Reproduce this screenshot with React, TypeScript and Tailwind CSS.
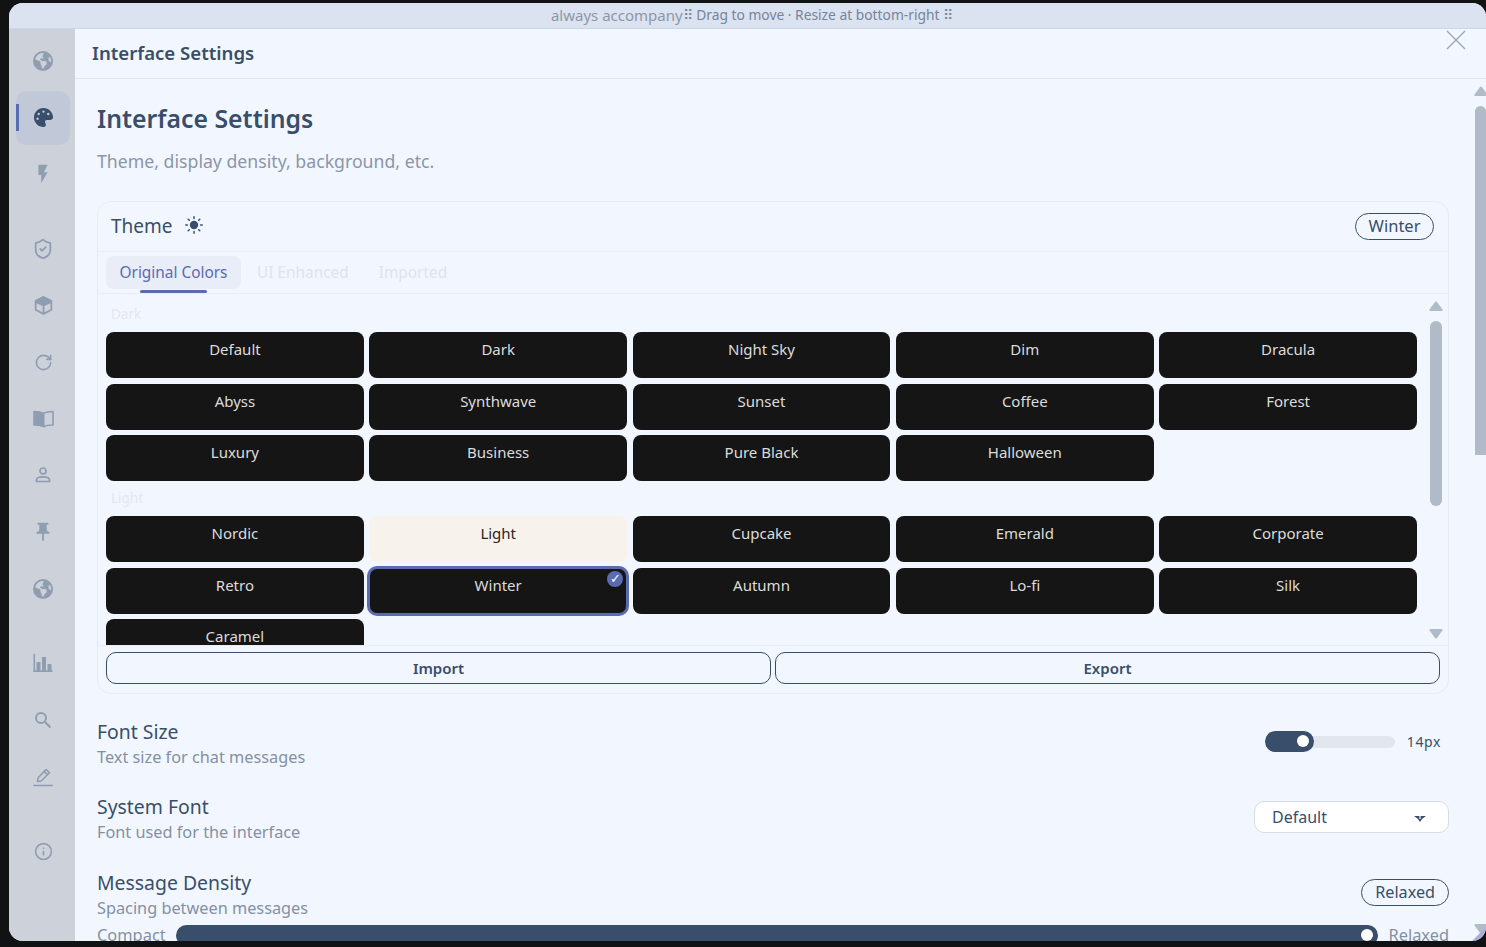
import type { ReactNode } from 'react'
import { FaEarthAmericas, FaPalette } from 'react-icons/fa6'
import { MdFlashOn, MdPushPin } from 'react-icons/md'
import { LuShieldCheck, LuRotateCw, LuInfo } from 'react-icons/lu'

const FONT = '"Noto Sans", "Open Sans", sans-serif'

function BoxIcon() {
  return (
    <svg width="21" height="21" viewBox="0 0 20 20" fill="none" stroke="currentColor" strokeWidth="1.7" strokeLinejoin="round">
      <path d="M10 2 L17.5 5.5 V14 L10 18 L2.5 14 V5.5 Z" />
      <path d="M2.5 6.5 L10 10 L17.5 6.5 M10 10 V18" />
      <path d="M3.5 5.5 L10 2 L10 9.5 Z M10 2 L16.5 5.5 L10 9.5 Z" fill="currentColor" />
    </svg>
  )
}

function BookIcon() {
  return (
    <svg width="21" height="18" viewBox="0 0 21 18" fill="none" stroke="currentColor" strokeWidth="1.6" strokeLinejoin="round">
      <path d="M10.5 3.5 C8 2 5 1.5 1 1.5 V15 C5 15 8 15.5 10.5 16.5 Z" fill="currentColor" />
      <path d="M10.5 3.5 C13 2 16 1.5 20 1.5 V15 C16 15 13 15.5 10.5 16.5 Z" />
    </svg>
  )
}

function PersonIcon() {
  return (
    <svg width="18" height="18" viewBox="0 0 18 18" fill="none" stroke="currentColor" strokeWidth="1.7">
      <circle cx="9" cy="5" r="3" />
      <path d="M2.5 15.5 V14 C2.5 11.8 4.5 10.8 9 10.8 C13.5 10.8 15.5 11.8 15.5 14 V15.5 Z" strokeLinejoin="round" />
    </svg>
  )
}

function ChartIcon() {
  return (
    <svg width="20" height="18" viewBox="0 0 20 18" fill="currentColor">
      <rect x="0.5" y="0" width="1.6" height="18" />
      <rect x="0.5" y="16.4" width="19" height="1.6" />
      <rect x="3.5" y="8" width="4" height="9" />
      <rect x="9" y="3" width="4" height="14" />
      <rect x="14.5" y="10" width="4" height="7" />
    </svg>
  )
}

function SearchIcon() {
  return (
    <svg width="18" height="18" viewBox="0 0 18 18" fill="none" stroke="currentColor" strokeWidth="2">
      <circle cx="7" cy="7" r="5" />
      <path d="M10.8 10.8 L16.5 16.5" />
    </svg>
  )
}

function PencilIcon() {
  return (
    <svg width="20" height="20" viewBox="0 0 20 20" fill="none" stroke="currentColor" strokeWidth="1.6" strokeLinejoin="round">
      <path d="M4.5 14.5 L5 11 L13 2.5 L16.5 5.7 L8.2 14 Z" />
      <path d="M11.2 4.5 L14.6 7.7" />
      <path d="M1 18.5 H19.5" strokeLinecap="round" />
    </svg>
  )
}

function SunIcon() {
  return (
    <svg width="18" height="18" viewBox="0 0 18 18" fill="#394e6a" stroke="#394e6a">
      <circle cx="9" cy="9" r="4.2" stroke="none" />
      <path
        d="M9 .8 V2.4 M9 15.6 V17.2 M.8 9 H2.4 M15.6 9 H17.2 M3.2 3.2 L4.3 4.3 M13.7 13.7 L14.8 14.8 M3.2 14.8 L4.3 13.7 M13.7 4.3 L14.8 3.2"
        strokeWidth="1.5"
        strokeLinecap="round"
      />
    </svg>
  )
}

function Arrow({ down }: { down?: boolean }) {
  return (
    <svg width="14" height="10" viewBox="0 0 14 10" fill="#b1bac7" className={down ? 'rotate-180' : ''}>
      <path d="M6 1 Q7 0 8 1 L13.5 8.5 Q14 10 12.5 10 H1.5 Q0 10 .5 8.5 Z" />
    </svg>
  )
}

const groups: { icon: ReactNode; active?: boolean }[][] = [
  [
    { icon: <FaEarthAmericas size={20} /> },
    { icon: <FaPalette size={19} />, active: true },
    { icon: <MdFlashOn size={22} /> },
  ],
  [
    { icon: <LuShieldCheck size={22} /> },
    { icon: <BoxIcon /> },
    { icon: <LuRotateCw size={19} /> },
    { icon: <BookIcon /> },
    { icon: <PersonIcon /> },
    { icon: <MdPushPin size={22} /> },
    { icon: <FaEarthAmericas size={20} /> },
  ],
  [{ icon: <ChartIcon /> }, { icon: <SearchIcon /> }, { icon: <PencilIcon /> }],
  [{ icon: <LuInfo size={19} /> }],
]

const dark = ['Default', 'Dark', 'Night Sky', 'Dim', 'Dracula', 'Abyss', 'Synthwave', 'Sunset', 'Coffee', 'Forest', 'Luxury', 'Business', 'Pure Black', 'Halloween']
const light = ['Nordic', 'Light', 'Cupcake', 'Emerald', 'Corporate', 'Retro', 'Winter', 'Autumn', 'Lo-fi', 'Silk', 'Caramel']

function ThemeButton({ name }: { name: string }) {
  if (name === 'Light') {
    return <button className="h-[46px] rounded-[8px] bg-[#f7f3ec] pt-[5px] text-[15px] leading-[24px] text-[#2e2320] flex justify-center">{name}</button>
  }
  if (name === 'Winter') {
    return (
      <button className="relative h-[46px] rounded-[8px] bg-[#151515] pt-[5px] text-[15px] leading-[24px] text-[#dcdcdc] flex justify-center outline-[3px] outline-[#5a6bb0] -outline-offset-[1px]">
        {name}
        <span className="absolute right-[4px] top-[3px] flex h-[16px] w-[16px] items-center justify-center rounded-full bg-[#5a6bb0] text-[13px] leading-none text-white">✓</span>
      </button>
    )
  }
  return <button className="h-[46px] rounded-[8px] bg-[#151515] pt-[5px] text-[15px] leading-[24px] text-[#dcdcdc] flex justify-center">{name}</button>
}

function SettingLabel({ title, desc }: { title: string; desc: string }) {
  return (
    <div>
      <div className="text-[19.4px] leading-[26px] text-[#394e6a]">{title}</div>
      <div className="text-[16.3px] leading-[24px] text-[#8490a3]">{desc}</div>
    </div>
  )
}

export default function App() {
  return (
    <div className="h-[947px] w-[1486px] overflow-hidden bg-[#111213] pl-[9px] pt-[3px]" style={{ fontFamily: FONT }}>
      <div className="relative flex h-[938px] flex-col overflow-hidden rounded-[14px] bg-[#f2f7ff]">
        <div className="flex h-[26px] shrink-0 items-center justify-center border-b border-[#cdd6e9] bg-[#dbe2f0] pl-[9px] text-[13.8px] text-[#76849c]">
          <span className="text-[15px] text-[#8d97a9]">always accompany</span>⠿ Drag to move · Resize at bottom-right ⠿
        </div>
        <div className="flex min-h-0 flex-1">
          <aside className="flex w-[66px] shrink-0 flex-col gap-[20.5px] bg-[#cdd1da] pl-[7px] pr-[5px] pt-[5px] text-[#8f9db0]">
            {groups.map((group, i) => (
              <div key={i} className="flex flex-col gap-[2.67px]">
                {group.map((item, j) => (
                  <div
                    key={j}
                    className={
                      item.active
                        ? 'relative flex h-[54px] items-center justify-center rounded-[10px] bg-[#c1c9d8] text-[#394e6a]'
                        : 'flex h-[54px] items-center justify-center'
                    }
                  >
                    {item.active && <span className="absolute left-0 top-[13px] h-[27px] w-[3px] bg-[#5a6bb0]" />}
                    {item.icon}
                  </div>
                ))}
              </div>
            ))}
          </aside>
          <main className="flex min-w-0 flex-1 flex-col">
            <header className="relative flex h-[50px] shrink-0 items-center border-b border-[#dfe6f2] pb-[2px] pl-[17px] text-[18.6px] font-semibold text-[#394e6a]">
              Interface Settings
              <svg width="20" height="20" viewBox="0 0 20 20" stroke="#9aa5b4" strokeWidth="1.3" className="absolute right-[20px] top-[1px]">
                <path d="M1 1 L19 19 M19 1 L1 19" />
              </svg>
            </header>
            <div className="flex min-h-0 flex-1">
              <div className="min-w-0 flex-1 overflow-hidden pl-[22px] pr-[26px] pt-[21px]">
                <h1 className="text-[24.8px] font-semibold leading-[36px] text-[#394e6a]">Interface Settings</h1>
                <p className="mt-[11px] text-[17.7px] leading-[28px] text-[#8b95a8]">Theme, display density, background, etc.</p>

                <section className="mt-[26px] h-[493px] rounded-[14px] border border-[#e6ebf5]">
                  <div className="flex h-[50px] items-center justify-between border-b border-[#e8edf6] pl-[13px] pr-[14px]">
                    <div className="flex items-center gap-[12px] text-[19px] text-[#394e6a]">
                      Theme
                      <span className="-mt-[4px]"><SunIcon /></span>
                    </div>
                    <span className="flex h-[27px] items-center rounded-full border border-[#394e6a] px-[12.5px] text-[16.5px] text-[#394e6a]">Winter</span>
                  </div>
                  <div className="flex h-[42px] items-start gap-[16px] border-b border-[#e8edf6] pl-[8px] pt-[4px] text-[15.4px]">
                    <div className="relative flex h-[33px] w-[135px] items-center justify-center rounded-[8px] bg-[#e8edf8] text-[#5a6bb0]">
                      Original Colors
                      <span className="absolute left-[34px] top-[34px] h-[3px] w-[67px] rounded-full bg-[#5a6bb0]" />
                    </div>
                    <span className="leading-[33px] text-[#dfe3ea]">UI Enhanced</span>
                    <span className="ml-[14px] leading-[33px] text-[#dfe3ea]">Imported</span>
                  </div>
                  <div className="flex h-[352px] overflow-hidden border-b border-[#e8edf6] pl-[8px]">
                    <div className="w-[1311px] shrink-0">
                      <div className="pl-[5px] pt-[10px] text-[13.5px] leading-[20px] text-[#e3e7ee]">Dark</div>
                      <div className="mt-[8px] grid grid-cols-5 gap-[5.5px]">
                        {dark.map((name) => (
                          <ThemeButton key={name} name={name} />
                        ))}
                      </div>
                      <div className="mt-[7px] pl-[5px] text-[13.5px] leading-[20px] text-[#e3e7ee]">Light</div>
                      <div className="mt-[8px] grid grid-cols-5 gap-[5.5px]">
                        {light.map((name) => (
                          <ThemeButton key={name} name={name} />
                        ))}
                      </div>
                    </div>
                    <div className="ml-[12px] flex w-[14px] flex-col items-center pt-[7px]">
                      <Arrow />
                      <div className="mt-[10px] h-[185px] w-[12px] rounded-full bg-[#b1bac7]" />
                      <div className="mt-[123px]"><Arrow down /></div>
                    </div>
                  </div>
                  <div className="flex gap-[4px] px-[8px] pt-[6px]">
                    <button className="h-[32px] flex-1 rounded-[10px] border border-[#394e6a] text-[15px] font-semibold text-[#394e6a]">Import</button>
                    <button className="h-[32px] flex-1 rounded-[10px] border border-[#394e6a] text-[15px] font-semibold text-[#394e6a]">Export</button>
                  </div>
                </section>

                <div className="mt-[25px] flex items-center justify-between">
                  <SettingLabel title="Font Size" desc="Text size for chat messages" />
                  <div className="mb-[5px] flex items-center gap-[11px] pr-[8px] text-[14px] tracking-[0.6px] text-[#394e6a]">
                    <div className="relative h-[12px] w-[130px] -translate-x-px rounded-full bg-[#e2e6ef]">
                      <div className="absolute -top-[5px] left-0 flex h-[21px] w-[49px] items-center justify-end rounded-full bg-[#394e6a] pr-[5px]">
                        <span className="h-[12px] w-[12px] rounded-full bg-white" />
                      </div>
                    </div>
                    14px
                  </div>
                </div>

                <div className="mt-[25px] flex items-center justify-between">
                  <SettingLabel title="System Font" desc="Font used for the interface" />
                  <div className="relative mb-[5px] flex h-[32px] w-[195px] items-center rounded-[10px] border border-[#d8dbe2] bg-white pl-[17px] text-[16px] text-[#394e6a]">
                    Default
                    <svg width="12" height="6" viewBox="0 0 12 6" fill="#394e6a" className="absolute right-[22px] top-[14px]">
                      <path d="M0 0 H5.4 V4 Z M6.6 0 H12 L6.6 4 Z M4 3 H8 L6 6 Z" />
                    </svg>
                  </div>
                </div>

                <div className="mt-[26px] flex items-center justify-between">
                  <SettingLabel title="Message Density" desc="Spacing between messages" />
                  <span className="mb-[5px] flex h-[27px] items-center rounded-full border border-[#394e6a] px-[13px] text-[16.2px] text-[#394e6a]">Relaxed</span>
                </div>
                <div className="mt-[3px] flex items-center gap-[10px] text-[16.4px] leading-[24px] text-[#8490a3]">
                  <span>Compact</span>
                  <div className="flex h-[21px] flex-1 items-center justify-end rounded-full bg-[#394e6a] pr-[5px]">
                    <span className="h-[12px] w-[12px] rounded-full bg-white" />
                  </div>
                  <span>Relaxed</span>
                </div>
              </div>
              <div className="flex w-[11px] shrink-0 flex-col items-center pt-[7px]">
                <Arrow />
                <div className="mt-[10px] h-[349px] w-[11px] rounded-t-full bg-[#b1bac7]" />
                <div className="mt-[469px]"><Arrow down /></div>
              </div>
            </div>
          </main>
        </div>
        <svg width="14" height="14" viewBox="0 0 14 14" fill="#a9aed8" className="absolute bottom-0 right-0">
          <path d="M14 0 V14 H0 Z" />
        </svg>
      </div>
    </div>
  )
}
